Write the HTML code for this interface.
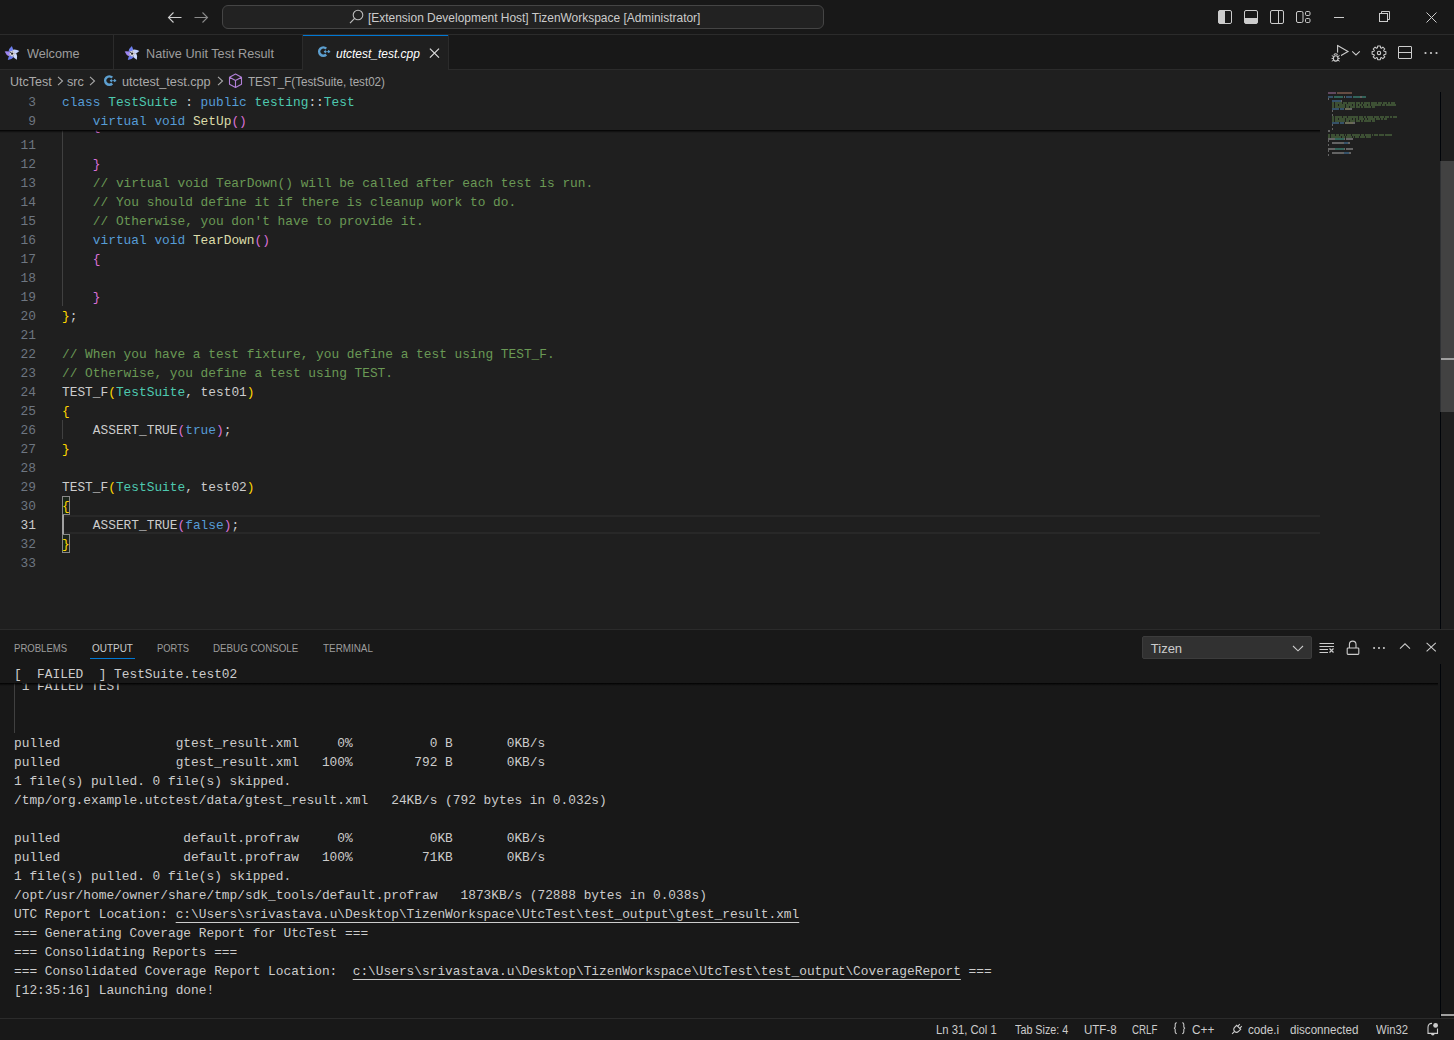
<!DOCTYPE html><html><head><meta charset="utf-8"><style>
*{margin:0;padding:0;box-sizing:border-box}
html,body{width:1454px;height:1040px;overflow:hidden;background:#1f1f1f}
body{position:relative;font-family:"Liberation Sans",sans-serif;color:#cccccc}
.a{position:absolute}
.t{position:absolute;white-space:pre;line-height:16px;height:16px}
.m{position:absolute;white-space:pre;font-family:"Liberation Mono",monospace;font-size:12.830px;line-height:19px;height:19px;padding-top:1px}
.ln{position:absolute;white-space:pre;font-family:"Liberation Mono",monospace;font-size:12.830px;line-height:19px;height:19px;text-align:right;width:36px;left:0;color:#6e7681;padding-top:1px}
.k{color:#569cd6}.ty{color:#4ec9b0}.fn{color:#dcdcaa}.cm{color:#6a9955}.b1{color:#ffd700}.b2{color:#da70d6}.df{color:#cccccc}
svg{position:absolute;overflow:visible}
</style></head><body>
<div class="a" style="left:0px;top:0px;width:1454px;height:34px;background:#181818;"></div>
<div class="a" style="left:0px;top:34px;width:1454px;height:1px;background:#2b2b2b;"></div>
<svg style="left:167px;top:11px;" width="16" height="13" viewBox="0 0 16 13"><path d="M1.5 6.5H14.5M6.5 1.5L1.5 6.5L6.5 11.5" fill="none" stroke="#cccccc" stroke-width="1.1"/></svg>
<svg style="left:193px;top:11px;" width="16" height="13" viewBox="0 0 16 13"><path d="M1.5 6.5H14.5M9.5 1.5L14.5 6.5L9.5 11.5" fill="none" stroke="#8a8a8a" stroke-width="1.1"/></svg>
<div class="a" style="left:222px;top:5px;width:602px;height:24px;background:#222222;border:1px solid #454545;border-radius:6px"></div>
<svg style="left:349px;top:9px;" width="16" height="16" viewBox="0 0 16 16"><circle cx="9" cy="6" r="4.8" fill="none" stroke="#bdbdbd" stroke-width="1.1"/><path d="M5.6 9.4L1 14.2" stroke="#bdbdbd" stroke-width="1.2"/></svg>
<div class="t" id="t1" style="left:368.00px;top:10px;font-size:12px;color:#cccccc;line-height:16px;height:16px;transform:scaleX(0.9955);transform-origin:0 0;">[Extension Development Host] TizenWorkspace [Administrator]</div>
<svg style="left:1218px;top:10px;" width="15" height="14" viewBox="0 0 15 14"><rect x="0.5" y="0.5" width="6" height="13" rx="1.5" fill="#cccccc"/><rect x="0.5" y="0.5" width="13" height="13" rx="1.5" fill="none" stroke="#cccccc"/><path d="M6.5 1V13" stroke="#cccccc"/></svg>
<svg style="left:1244px;top:10px;" width="15" height="14" viewBox="0 0 15 14"><rect x="0.5" y="8.5" width="13" height="5" rx="1.5" fill="#cccccc"/><rect x="0.5" y="0.5" width="13" height="13" rx="1.5" fill="none" stroke="#cccccc"/><path d="M1 8.5H13" stroke="#cccccc"/></svg>
<svg style="left:1270px;top:10px;" width="15" height="14" viewBox="0 0 15 14"><rect x="0.5" y="0.5" width="13" height="13" rx="1.5" fill="none" stroke="#cccccc"/><path d="M8.5 1V13" stroke="#cccccc"/></svg>
<svg style="left:1296px;top:10px;" width="15" height="14" viewBox="0 0 15 14"><rect x="0.5" y="1.5" width="6.5" height="11" rx="1.5" fill="none" stroke="#cccccc"/><rect x="9.5" y="1.5" width="4.5" height="4" rx="1.2" fill="none" stroke="#cccccc"/><rect x="9.5" y="8.5" width="4.5" height="4" rx="1.2" fill="none" stroke="#cccccc"/></svg>
<div class="a" style="left:1334px;top:17px;width:10px;height:1px;background:#cccccc;"></div>
<svg style="left:1379px;top:11px;" width="12" height="12" viewBox="0 0 12 12"><rect x="0.5" y="2.5" width="8" height="8" fill="none" stroke="#cccccc"/><path d="M2.5 2.5V0.5H10.5V8.5H8.5" fill="none" stroke="#cccccc"/></svg>
<svg style="left:1425.5px;top:11.5px;" width="12" height="12" viewBox="0 0 12 12"><path d="M0.5 0.5L10.5 10.5M10.5 0.5L0.5 10.5" stroke="#cccccc" stroke-width="1"/></svg>
<div class="a" style="left:0px;top:35px;width:1454px;height:35px;background:#181818;"></div>
<div class="a" style="left:0px;top:69px;width:1454px;height:1px;background:#2b2b2b;"></div>
<div class="a" style="left:113px;top:35px;width:1px;height:34px;background:#2b2b2b;"></div>
<svg style="left:5px;top:46px;" width="15" height="15" viewBox="0 0 15 15"><g transform="translate(-0.6 -0.3) scale(1.1)"><g transform="rotate(0 7 7.2)"><path d="M3.7 5.7Q4.1 2.2 6.8 0.2Q8.1 2.6 7.8 5.0Z" fill="#6d80f2"/><path d="M7 7.2L4.1 5.8Q5.9 4.3 7.8 5.0Z" fill="#d6d6de"/><path d="M7 7.2L7.9 4.7" stroke="#141414" stroke-width="0.6"/></g><g transform="rotate(72 7 7.2)"><path d="M3.7 5.7Q4.1 2.2 6.8 0.2Q8.1 2.6 7.8 5.0Z" fill="#c4d2ff"/><path d="M7 7.2L4.1 5.8Q5.9 4.3 7.8 5.0Z" fill="#d6d6de"/><path d="M7 7.2L7.9 4.7" stroke="#141414" stroke-width="0.6"/></g><g transform="rotate(144 7 7.2)"><path d="M3.7 5.7Q4.1 2.2 6.8 0.2Q8.1 2.6 7.8 5.0Z" fill="#cddcff"/><path d="M7 7.2L4.1 5.8Q5.9 4.3 7.8 5.0Z" fill="#d6d6de"/><path d="M7 7.2L7.9 4.7" stroke="#141414" stroke-width="0.6"/></g><g transform="rotate(216 7 7.2)"><path d="M3.7 5.7Q4.1 2.2 6.8 0.2Q8.1 2.6 7.8 5.0Z" fill="#6a7cf0"/><path d="M7 7.2L4.1 5.8Q5.9 4.3 7.8 5.0Z" fill="#d6d6de"/><path d="M7 7.2L7.9 4.7" stroke="#141414" stroke-width="0.6"/></g><g transform="rotate(288 7 7.2)"><path d="M3.7 5.7Q4.1 2.2 6.8 0.2Q8.1 2.6 7.8 5.0Z" fill="#9d86f2"/><path d="M7 7.2L4.1 5.8Q5.9 4.3 7.8 5.0Z" fill="#d6d6de"/><path d="M7 7.2L7.9 4.7" stroke="#141414" stroke-width="0.6"/></g><circle cx="7" cy="7.2" r="0.8" fill="#141414"/></g></svg>
<div class="t" id="t2" style="left:26.78px;top:46px;font-size:13px;color:#9d9d9d;line-height:16px;height:16px;transform:scaleX(0.9741);transform-origin:0 0;">Welcome</div>
<div class="a" style="left:302px;top:35px;width:1px;height:34px;background:#2b2b2b;"></div>
<svg style="left:125px;top:46px;" width="15" height="15" viewBox="0 0 15 15"><g transform="translate(-0.6 -0.3) scale(1.1)"><g transform="rotate(0 7 7.2)"><path d="M3.7 5.7Q4.1 2.2 6.8 0.2Q8.1 2.6 7.8 5.0Z" fill="#6d80f2"/><path d="M7 7.2L4.1 5.8Q5.9 4.3 7.8 5.0Z" fill="#d6d6de"/><path d="M7 7.2L7.9 4.7" stroke="#141414" stroke-width="0.6"/></g><g transform="rotate(72 7 7.2)"><path d="M3.7 5.7Q4.1 2.2 6.8 0.2Q8.1 2.6 7.8 5.0Z" fill="#c4d2ff"/><path d="M7 7.2L4.1 5.8Q5.9 4.3 7.8 5.0Z" fill="#d6d6de"/><path d="M7 7.2L7.9 4.7" stroke="#141414" stroke-width="0.6"/></g><g transform="rotate(144 7 7.2)"><path d="M3.7 5.7Q4.1 2.2 6.8 0.2Q8.1 2.6 7.8 5.0Z" fill="#cddcff"/><path d="M7 7.2L4.1 5.8Q5.9 4.3 7.8 5.0Z" fill="#d6d6de"/><path d="M7 7.2L7.9 4.7" stroke="#141414" stroke-width="0.6"/></g><g transform="rotate(216 7 7.2)"><path d="M3.7 5.7Q4.1 2.2 6.8 0.2Q8.1 2.6 7.8 5.0Z" fill="#6a7cf0"/><path d="M7 7.2L4.1 5.8Q5.9 4.3 7.8 5.0Z" fill="#d6d6de"/><path d="M7 7.2L7.9 4.7" stroke="#141414" stroke-width="0.6"/></g><g transform="rotate(288 7 7.2)"><path d="M3.7 5.7Q4.1 2.2 6.8 0.2Q8.1 2.6 7.8 5.0Z" fill="#9d86f2"/><path d="M7 7.2L4.1 5.8Q5.9 4.3 7.8 5.0Z" fill="#d6d6de"/><path d="M7 7.2L7.9 4.7" stroke="#141414" stroke-width="0.6"/></g><circle cx="7" cy="7.2" r="0.8" fill="#141414"/></g></svg>
<div class="t" id="t3" style="left:145.61px;top:46px;font-size:13px;color:#9d9d9d;line-height:16px;height:16px;transform:scaleX(0.9748);transform-origin:0 0;">Native Unit Test Result</div>
<div class="a" style="left:303px;top:35px;width:145px;height:35px;background:#1f1f1f;"></div>
<div class="a" style="left:303px;top:35px;width:145px;height:1px;background:#0078d4;"></div>
<div class="a" style="left:448px;top:35px;width:1px;height:34px;background:#2b2b2b;"></div>
<svg style="left:318px;top:46px;" width="13" height="12" viewBox="0 0 13 12"><path d="M8.2 2.7A4.1 4.1 0 1 0 8.2 8.5" fill="none" stroke="#5d9fcf" stroke-width="2.5"/><path d="M5.9 5.6H8.7M7.3 4.2V7M9.2 5.6H12.2M10.7 4.1V7.1" stroke="#5d9fcf" stroke-width="1.15"/></svg>
<div class="t" id="t4" style="left:335.76px;top:46px;font-size:13px;color:#ffffff;line-height:16px;height:16px;transform:scaleX(0.9217);transform-origin:0 0;font-style:italic">utctest_test.cpp</div>
<svg style="left:429px;top:48px;" width="11" height="11" viewBox="0 0 11 11"><path d="M0.9 0.6L10 9.7M10 0.6L0.9 9.7" stroke="#dddddd" stroke-width="1.2"/></svg>
<svg style="left:1331px;top:44px;" width="30" height="18" viewBox="0 0 30 18"><path d="M6.6 1.6L17 7.6L6.6 13.6Z" fill="none" stroke="#cccccc" stroke-width="1.1" stroke-linejoin="miter"/><rect x="0" y="8.6" width="10" height="9.4" fill="#181818"/><path d="M3 11.2a1.7 1.5 0 0 1 3.4 0" fill="none" stroke="#cccccc" stroke-width="1.1"/><ellipse cx="4.7" cy="14.4" rx="2.3" ry="2.7" fill="none" stroke="#cccccc" stroke-width="1.1"/><path d="M0.8 11.6L2.6 12.6M8.6 11.6L6.8 12.6M0.6 14.4H2.4M7 14.4H8.8M0.8 17.2L2.6 16.2M8.6 17.2L6.8 16.2" stroke="#cccccc" stroke-width="1"/><path d="M21.2 7.4L25 11L28.8 7.4" fill="none" stroke="#cccccc" stroke-width="1.05"/></svg>
<svg style="left:1371px;top:45px;" width="16" height="16" viewBox="0 0 16 16"><circle cx="8" cy="7.9" r="1.7" fill="none" stroke="#cccccc" stroke-width="1.1"/><path d="M6.44 2.83 L6.65 1.03 L9.35 1.03 L9.56 2.83 L10.48 3.22 L11.90 2.09 L13.81 4.00 L12.68 5.42 L13.07 6.34 L14.87 6.55 L14.87 9.25 L13.07 9.46 L12.68 10.38 L13.81 11.80 L11.90 13.71 L10.48 12.58 L9.56 12.97 L9.35 14.77 L6.65 14.77 L6.44 12.97 L5.52 12.58 L4.10 13.71 L2.19 11.80 L3.32 10.38 L2.93 9.46 L1.13 9.25 L1.13 6.55 L2.93 6.34 L3.32 5.42 L2.19 4.00 L4.10 2.09 L5.52 3.22Z" fill="none" stroke="#cccccc" stroke-width="1.05" stroke-linejoin="round"/></svg>
<svg style="left:1398px;top:46px;" width="15" height="14" viewBox="0 0 15 14"><rect x="0.5" y="0.5" width="13" height="12" rx="0.5" fill="none" stroke="#cccccc" stroke-width="1"/><path d="M1 6.5H13.5" stroke="#cccccc" stroke-width="1"/></svg>
<svg style="left:1424px;top:51px;" width="14" height="4" viewBox="0 0 14 4"><circle cx="1.5" cy="2" r="1.1" fill="#cccccc"/><circle cx="7" cy="2" r="1.1" fill="#cccccc"/><circle cx="12.5" cy="2" r="1.1" fill="#cccccc"/></svg>
<div class="a" style="left:0px;top:70px;width:1454px;height:22px;background:#1f1f1f;"></div>
<div class="t" id="t5" style="left:9.62px;top:74px;font-size:13px;color:#a9a9a9;line-height:16px;height:16px;transform:scaleX(0.9605);transform-origin:0 0;">UtcTest</div>
<svg style="left:57px;top:76px;" width="7" height="10" viewBox="0 0 7 10"><path d="M1 0.8L5.5 5L1 9.2" fill="none" stroke="#a9a9a9" stroke-width="1.1"/></svg>
<div class="t" id="t6" style="left:66.81px;top:74px;font-size:13px;color:#a9a9a9;line-height:16px;height:16px;transform:scaleX(0.9706);transform-origin:0 0;">src</div>
<svg style="left:89px;top:76px;" width="7" height="10" viewBox="0 0 7 10"><path d="M1 0.8L5.5 5L1 9.2" fill="none" stroke="#a9a9a9" stroke-width="1.1"/></svg>
<svg style="left:104px;top:75px;" width="13" height="12" viewBox="0 0 13 12"><path d="M8.2 2.7A4.1 4.1 0 1 0 8.2 8.5" fill="none" stroke="#5d9fcf" stroke-width="2.5"/><path d="M5.9 5.6H8.7M7.3 4.2V7M9.2 5.6H12.2M10.7 4.1V7.1" stroke="#5d9fcf" stroke-width="1.15"/></svg>
<div class="t" id="t7" style="left:122.19px;top:74px;font-size:13px;color:#a9a9a9;line-height:16px;height:16px;transform:scaleX(0.9736);transform-origin:0 0;">utctest_test.cpp</div>
<svg style="left:217px;top:76px;" width="7" height="10" viewBox="0 0 7 10"><path d="M1 0.8L5.5 5L1 9.2" fill="none" stroke="#a9a9a9" stroke-width="1.1"/></svg>
<svg style="left:228px;top:73px;" width="15" height="16" viewBox="0 0 15 16"><path d="M7.5 1L13.5 4.2V11.3L7.5 14.5L1.5 11.3V4.2Z M1.5 4.2L7.5 7.5L13.5 4.2 M7.5 7.5V14.5" fill="none" stroke="#b180d7" stroke-width="1.1" stroke-linejoin="round"/></svg>
<div class="t" id="t8" style="left:247.95px;top:74px;font-size:13px;color:#a9a9a9;line-height:16px;height:16px;transform:scaleX(0.8941);transform-origin:0 0;">TEST_F(TestSuite, test02)</div>
<div class="a" style="left:0px;top:92px;width:1440px;height:537px;background:#1f1f1f;"></div>
<div class="a" style="left:62px;top:515px;width:1258px;height:19px;background:transparent;border-top:2px solid #282828;border-bottom:2px solid #282828"></div>
<div class="a" style="left:62px;top:116px;width:1px;height:190px;background:#404040;"></div>
<div class="a" style="left:62px;top:420px;width:1px;height:19px;background:#404040;"></div>
<div class="a" style="left:62px;top:515px;width:2px;height:19px;background:#a0a0a0;"></div>
<div class="a" style="left:62px;top:496px;width:8px;height:19px;background:rgba(0,100,0,0.1);border:1px solid #888888"></div>
<div class="a" style="left:62px;top:534px;width:8px;height:19px;background:rgba(0,100,0,0.1);border:1px solid #888888"></div>
<div class="m" style="left:62px;top:116px;color:#cccccc">    <span class="b2">{</span></div>
<div class="ln" style="top:135px;">11</div>
<div class="m" style="left:62px;top:135px;color:#cccccc"></div>
<div class="ln" style="top:154px;">12</div>
<div class="m" style="left:62px;top:154px;color:#cccccc">    <span class="b2">}</span></div>
<div class="ln" style="top:173px;">13</div>
<div class="m" style="left:62px;top:173px;color:#cccccc">    <span class="cm">// virtual void TearDown() will be called after each test is run.</span></div>
<div class="ln" style="top:192px;">14</div>
<div class="m" style="left:62px;top:192px;color:#cccccc">    <span class="cm">// You should define it if there is cleanup work to do.</span></div>
<div class="ln" style="top:211px;">15</div>
<div class="m" style="left:62px;top:211px;color:#cccccc">    <span class="cm">// Otherwise, you don&#x27;t have to provide it.</span></div>
<div class="ln" style="top:230px;">16</div>
<div class="m" style="left:62px;top:230px;color:#cccccc">    <span class="k">virtual</span> <span class="k">void</span> <span class="fn">TearDown</span><span class="b2">()</span></div>
<div class="ln" style="top:249px;">17</div>
<div class="m" style="left:62px;top:249px;color:#cccccc">    <span class="b2">{</span></div>
<div class="ln" style="top:268px;">18</div>
<div class="m" style="left:62px;top:268px;color:#cccccc"></div>
<div class="ln" style="top:287px;">19</div>
<div class="m" style="left:62px;top:287px;color:#cccccc">    <span class="b2">}</span></div>
<div class="ln" style="top:306px;">20</div>
<div class="m" style="left:62px;top:306px;color:#cccccc"><span class="b1">}</span>;</div>
<div class="ln" style="top:325px;">21</div>
<div class="m" style="left:62px;top:325px;color:#cccccc"></div>
<div class="ln" style="top:344px;">22</div>
<div class="m" style="left:62px;top:344px;color:#cccccc"><span class="cm">// When you have a test fixture, you define a test using TEST_F.</span></div>
<div class="ln" style="top:363px;">23</div>
<div class="m" style="left:62px;top:363px;color:#cccccc"><span class="cm">// Otherwise, you define a test using TEST.</span></div>
<div class="ln" style="top:382px;">24</div>
<div class="m" style="left:62px;top:382px;color:#cccccc">TEST_F<span class="b1">(</span><span class="ty">TestSuite</span>, test01<span class="b1">)</span></div>
<div class="ln" style="top:401px;">25</div>
<div class="m" style="left:62px;top:401px;color:#cccccc"><span class="b1">{</span></div>
<div class="ln" style="top:420px;">26</div>
<div class="m" style="left:62px;top:420px;color:#cccccc">    ASSERT_TRUE<span class="b2">(</span><span class="k">true</span><span class="b2">)</span>;</div>
<div class="ln" style="top:439px;">27</div>
<div class="m" style="left:62px;top:439px;color:#cccccc"><span class="b1">}</span></div>
<div class="ln" style="top:458px;">28</div>
<div class="m" style="left:62px;top:458px;color:#cccccc"></div>
<div class="ln" style="top:477px;">29</div>
<div class="m" style="left:62px;top:477px;color:#cccccc">TEST_F<span class="b1">(</span><span class="ty">TestSuite</span>, test02<span class="b1">)</span></div>
<div class="ln" style="top:496px;">30</div>
<div class="m" style="left:62px;top:496px;color:#cccccc"><span class="b1">{</span></div>
<div class="ln" style="top:515px;color:#cccccc;">31</div>
<div class="m" style="left:62px;top:515px;color:#cccccc">    ASSERT_TRUE<span class="b2">(</span><span class="k">false</span><span class="b2">)</span>;</div>
<div class="ln" style="top:534px;">32</div>
<div class="m" style="left:62px;top:534px;color:#cccccc"><span class="b1">}</span></div>
<div class="ln" style="top:553px;">33</div>
<div class="m" style="left:62px;top:553px;color:#cccccc"></div>
<div class="a" style="left:0px;top:92px;width:1320px;height:38px;background:#1f1f1f;"></div>
<div class="a" style="left:0;top:130px;width:1320px;height:3px;background:linear-gradient(#000000 0,rgba(0,0,0,0.55) 1px,rgba(0,0,0,0) 3px)"></div>
<div class="ln" style="top:92px;">3</div>
<div class="m" style="left:62px;top:92px;color:#cccccc"><span class="k">class</span> <span class="ty">TestSuite</span> : <span class="k">public</span> <span class="ty">testing</span>::<span class="ty">Test</span></div>
<div class="ln" style="top:111px;">9</div>
<div class="m" style="left:62px;top:111px;color:#cccccc">    <span class="k">virtual</span> <span class="k">void</span> <span class="fn">SetUp</span><span class="b2">()</span></div>
<svg style="left:1328px;top:92px;opacity:0.4" width="80" height="70" viewBox="0 0 80 70"><rect x="0" y="0" width="8" height="2" fill="#c586c0"/><rect x="9" y="0" width="15" height="2" fill="#ce9178"/><rect x="0" y="4" width="5" height="2" fill="#569cd6"/><rect x="6" y="4" width="9" height="2" fill="#4ec9b0"/><rect x="16" y="4" width="1" height="2" fill="#cccccc"/><rect x="18" y="4" width="6" height="2" fill="#569cd6"/><rect x="25" y="4" width="7" height="2" fill="#4ec9b0"/><rect x="32" y="4" width="2" height="2" fill="#cccccc"/><rect x="34" y="4" width="4" height="2" fill="#4ec9b0"/><rect x="0" y="6" width="1" height="2" fill="#cccccc"/><rect x="4" y="8" width="9" height="2" fill="#569cd6"/><rect x="13" y="8" width="1" height="2" fill="#cccccc"/><rect x="4" y="10" width="2" height="2" fill="#6a9955"/><rect x="7" y="10" width="7" height="2" fill="#6a9955"/><rect x="15" y="10" width="4" height="2" fill="#6a9955"/><rect x="20" y="10" width="7" height="2" fill="#6a9955"/><rect x="28" y="10" width="4" height="2" fill="#6a9955"/><rect x="33" y="10" width="2" height="2" fill="#6a9955"/><rect x="36" y="10" width="6" height="2" fill="#6a9955"/><rect x="43" y="10" width="6" height="2" fill="#6a9955"/><rect x="50" y="10" width="4" height="2" fill="#6a9955"/><rect x="55" y="10" width="4" height="2" fill="#6a9955"/><rect x="60" y="10" width="2" height="2" fill="#6a9955"/><rect x="63" y="10" width="4" height="2" fill="#6a9955"/><rect x="4" y="12" width="2" height="2" fill="#6a9955"/><rect x="7" y="12" width="3" height="2" fill="#6a9955"/><rect x="11" y="12" width="6" height="2" fill="#6a9955"/><rect x="18" y="12" width="6" height="2" fill="#6a9955"/><rect x="25" y="12" width="2" height="2" fill="#6a9955"/><rect x="28" y="12" width="2" height="2" fill="#6a9955"/><rect x="31" y="12" width="3" height="2" fill="#6a9955"/><rect x="35" y="12" width="4" height="2" fill="#6a9955"/><rect x="40" y="12" width="2" height="2" fill="#6a9955"/><rect x="43" y="12" width="10" height="2" fill="#6a9955"/><rect x="54" y="12" width="3" height="2" fill="#6a9955"/><rect x="58" y="12" width="10" height="2" fill="#6a9955"/><rect x="4" y="14" width="2" height="2" fill="#6a9955"/><rect x="7" y="14" width="10" height="2" fill="#6a9955"/><rect x="18" y="14" width="3" height="2" fill="#6a9955"/><rect x="22" y="14" width="5" height="2" fill="#6a9955"/><rect x="28" y="14" width="4" height="2" fill="#6a9955"/><rect x="33" y="14" width="2" height="2" fill="#6a9955"/><rect x="36" y="14" width="7" height="2" fill="#6a9955"/><rect x="44" y="14" width="3" height="2" fill="#6a9955"/><rect x="4" y="16" width="7" height="2" fill="#569cd6"/><rect x="12" y="16" width="4" height="2" fill="#569cd6"/><rect x="17" y="16" width="5" height="2" fill="#dcdcaa"/><rect x="22" y="16" width="2" height="2" fill="#cccccc"/><rect x="4" y="18" width="1" height="2" fill="#cccccc"/><rect x="4" y="22" width="1" height="2" fill="#cccccc"/><rect x="4" y="24" width="2" height="2" fill="#6a9955"/><rect x="7" y="24" width="7" height="2" fill="#6a9955"/><rect x="15" y="24" width="4" height="2" fill="#6a9955"/><rect x="20" y="24" width="10" height="2" fill="#6a9955"/><rect x="31" y="24" width="4" height="2" fill="#6a9955"/><rect x="36" y="24" width="2" height="2" fill="#6a9955"/><rect x="39" y="24" width="6" height="2" fill="#6a9955"/><rect x="46" y="24" width="5" height="2" fill="#6a9955"/><rect x="52" y="24" width="4" height="2" fill="#6a9955"/><rect x="57" y="24" width="4" height="2" fill="#6a9955"/><rect x="62" y="24" width="2" height="2" fill="#6a9955"/><rect x="65" y="24" width="4" height="2" fill="#6a9955"/><rect x="4" y="26" width="2" height="2" fill="#6a9955"/><rect x="7" y="26" width="3" height="2" fill="#6a9955"/><rect x="11" y="26" width="6" height="2" fill="#6a9955"/><rect x="18" y="26" width="6" height="2" fill="#6a9955"/><rect x="25" y="26" width="2" height="2" fill="#6a9955"/><rect x="28" y="26" width="2" height="2" fill="#6a9955"/><rect x="31" y="26" width="5" height="2" fill="#6a9955"/><rect x="37" y="26" width="2" height="2" fill="#6a9955"/><rect x="40" y="26" width="7" height="2" fill="#6a9955"/><rect x="48" y="26" width="4" height="2" fill="#6a9955"/><rect x="53" y="26" width="2" height="2" fill="#6a9955"/><rect x="56" y="26" width="3" height="2" fill="#6a9955"/><rect x="4" y="28" width="2" height="2" fill="#6a9955"/><rect x="7" y="28" width="10" height="2" fill="#6a9955"/><rect x="18" y="28" width="3" height="2" fill="#6a9955"/><rect x="22" y="28" width="5" height="2" fill="#6a9955"/><rect x="28" y="28" width="4" height="2" fill="#6a9955"/><rect x="33" y="28" width="2" height="2" fill="#6a9955"/><rect x="36" y="28" width="7" height="2" fill="#6a9955"/><rect x="44" y="28" width="3" height="2" fill="#6a9955"/><rect x="4" y="30" width="7" height="2" fill="#569cd6"/><rect x="12" y="30" width="4" height="2" fill="#569cd6"/><rect x="17" y="30" width="8" height="2" fill="#dcdcaa"/><rect x="25" y="30" width="2" height="2" fill="#cccccc"/><rect x="4" y="32" width="1" height="2" fill="#cccccc"/><rect x="4" y="36" width="1" height="2" fill="#cccccc"/><rect x="0" y="38" width="1" height="2" fill="#cccccc"/><rect x="1" y="38" width="1" height="2" fill="#cccccc"/><rect x="0" y="42" width="2" height="2" fill="#6a9955"/><rect x="3" y="42" width="4" height="2" fill="#6a9955"/><rect x="8" y="42" width="3" height="2" fill="#6a9955"/><rect x="12" y="42" width="4" height="2" fill="#6a9955"/><rect x="17" y="42" width="1" height="2" fill="#6a9955"/><rect x="19" y="42" width="4" height="2" fill="#6a9955"/><rect x="24" y="42" width="8" height="2" fill="#6a9955"/><rect x="33" y="42" width="3" height="2" fill="#6a9955"/><rect x="37" y="42" width="6" height="2" fill="#6a9955"/><rect x="44" y="42" width="1" height="2" fill="#6a9955"/><rect x="46" y="42" width="4" height="2" fill="#6a9955"/><rect x="51" y="42" width="5" height="2" fill="#6a9955"/><rect x="57" y="42" width="7" height="2" fill="#6a9955"/><rect x="0" y="44" width="2" height="2" fill="#6a9955"/><rect x="3" y="44" width="10" height="2" fill="#6a9955"/><rect x="14" y="44" width="3" height="2" fill="#6a9955"/><rect x="18" y="44" width="6" height="2" fill="#6a9955"/><rect x="25" y="44" width="1" height="2" fill="#6a9955"/><rect x="27" y="44" width="4" height="2" fill="#6a9955"/><rect x="32" y="44" width="5" height="2" fill="#6a9955"/><rect x="38" y="44" width="5" height="2" fill="#6a9955"/><rect x="0" y="46" width="6" height="2" fill="#cccccc"/><rect x="6" y="46" width="1" height="2" fill="#cccccc"/><rect x="7" y="46" width="9" height="2" fill="#4ec9b0"/><rect x="16" y="46" width="1" height="2" fill="#cccccc"/><rect x="18" y="46" width="6" height="2" fill="#cccccc"/><rect x="24" y="46" width="1" height="2" fill="#cccccc"/><rect x="0" y="48" width="1" height="2" fill="#cccccc"/><rect x="4" y="50" width="11" height="2" fill="#cccccc"/><rect x="15" y="50" width="1" height="2" fill="#cccccc"/><rect x="16" y="50" width="4" height="2" fill="#569cd6"/><rect x="20" y="50" width="1" height="2" fill="#cccccc"/><rect x="21" y="50" width="1" height="2" fill="#cccccc"/><rect x="0" y="52" width="1" height="2" fill="#cccccc"/><rect x="0" y="56" width="6" height="2" fill="#cccccc"/><rect x="6" y="56" width="1" height="2" fill="#cccccc"/><rect x="7" y="56" width="9" height="2" fill="#4ec9b0"/><rect x="16" y="56" width="1" height="2" fill="#cccccc"/><rect x="18" y="56" width="6" height="2" fill="#cccccc"/><rect x="24" y="56" width="1" height="2" fill="#cccccc"/><rect x="0" y="58" width="1" height="2" fill="#cccccc"/><rect x="4" y="60" width="11" height="2" fill="#cccccc"/><rect x="15" y="60" width="1" height="2" fill="#cccccc"/><rect x="16" y="60" width="5" height="2" fill="#569cd6"/><rect x="21" y="60" width="1" height="2" fill="#cccccc"/><rect x="22" y="60" width="1" height="2" fill="#cccccc"/><rect x="0" y="62" width="1" height="2" fill="#cccccc"/></svg>
<div class="a" style="left:1440px;top:92px;width:14px;height:537px;background:#1f1f1f;"></div>
<div class="a" style="left:1440px;top:92px;width:1px;height:537px;background:#010409;"></div>
<div class="a" style="left:1440px;top:161px;width:14px;height:251px;background:rgba(121,121,121,0.4);"></div>
<div class="a" style="left:1441px;top:358px;width:13px;height:2px;background:#a0a0a0;"></div>
<div class="a" style="left:0px;top:629px;width:1454px;height:389px;background:#181818;"></div>
<div class="a" style="left:0px;top:629px;width:1454px;height:1px;background:#2b2b2b;"></div>
<div class="t" id="t9" style="left:14.43px;top:640px;font-size:11px;color:#9d9d9d;line-height:16px;height:16px;transform:scaleX(0.8689);transform-origin:0 0;">PROBLEMS</div>
<div class="t" id="t10" style="left:91.80px;top:640px;font-size:11px;color:#cccccc;line-height:16px;height:16px;transform:scaleX(0.9044);transform-origin:0 0;">OUTPUT</div>
<div class="t" id="t11" style="left:157.07px;top:640px;font-size:11px;color:#9d9d9d;line-height:16px;height:16px;transform:scaleX(0.8514);transform-origin:0 0;">PORTS</div>
<div class="t" id="t12" style="left:213.24px;top:640px;font-size:11px;color:#9d9d9d;line-height:16px;height:16px;transform:scaleX(0.8884);transform-origin:0 0;">DEBUG CONSOLE</div>
<div class="t" id="t13" style="left:323.00px;top:640px;font-size:11px;color:#9d9d9d;line-height:16px;height:16px;transform:scaleX(0.8982);transform-origin:0 0;">TERMINAL</div>
<div class="a" style="left:90px;top:658px;width:45px;height:1px;background:#0078d4;"></div>
<div class="a" style="left:1142px;top:636px;width:170px;height:23px;background:#313131;border:1px solid #3c3c3c;border-radius:2px"></div>
<div class="t" id="t14" style="left:1150.79px;top:641px;font-size:13px;color:#cccccc;line-height:16px;height:16px;transform:scaleX(1.0000);transform-origin:0 0;">Tizen</div>
<svg style="left:1292px;top:645px;" width="12" height="7" viewBox="0 0 12 7"><path d="M1 1L6 5.8L11 1" fill="none" stroke="#cccccc" stroke-width="1.05"/></svg>
<svg style="left:1319px;top:641px;" width="16" height="13" viewBox="0 0 16 13"><path d="M0.5 2.5H15M0.5 5.5H15M0.5 8.5H9M0.5 11.5H9" stroke="#cccccc" stroke-width="1"/><path d="M10.5 7.5L14.5 11.5M14.5 7.5L10.5 11.5" stroke="#cccccc" stroke-width="1.2"/></svg>
<svg style="left:1346px;top:640px;" width="14" height="16" viewBox="0 0 14 16"><path d="M3.4 8V4.4a3.3 3.3 0 0 1 6.6 0V8" fill="none" stroke="#cccccc" stroke-width="1.1"/><rect x="1.2" y="8" width="11.6" height="6.4" rx="0.8" fill="none" stroke="#cccccc" stroke-width="1.1"/></svg>
<svg style="left:1372px;top:646px;" width="14" height="4" viewBox="0 0 14 4"><circle cx="2.1" cy="2" r="1.05" fill="#cccccc"/><circle cx="7" cy="2" r="1.05" fill="#cccccc"/><circle cx="11.9" cy="2" r="1.05" fill="#cccccc"/></svg>
<svg style="left:1399px;top:643px;" width="12" height="8" viewBox="0 0 12 8"><path d="M1 5.6L6 0.8L11 5.6" fill="none" stroke="#cccccc" stroke-width="1.05"/></svg>
<svg style="left:1426px;top:642px;" width="11" height="11" viewBox="0 0 11 11"><path d="M0.6 0.8L9.8 9.4M9.8 0.8L0.6 9.4" stroke="#cccccc" stroke-width="1.05"/></svg>
<div class="m" style="left:14px;top:676px;color:#cccccc"> 1 FAILED TEST</div>
<div class="m" style="left:14px;top:733px;color:#cccccc">pulled               gtest_result.xml     0%          0 B       0KB/s</div>
<div class="m" style="left:14px;top:752px;color:#cccccc">pulled               gtest_result.xml   100%        792 B       0KB/s</div>
<div class="m" style="left:14px;top:771px;color:#cccccc">1 file(s) pulled. 0 file(s) skipped.</div>
<div class="m" style="left:14px;top:790px;color:#cccccc">/tmp/org.example.utctest/data/gtest_result.xml   24KB/s (792 bytes in 0.032s)</div>
<div class="m" style="left:14px;top:828px;color:#cccccc">pulled                default.profraw     0%          0KB       0KB/s</div>
<div class="m" style="left:14px;top:847px;color:#cccccc">pulled                default.profraw   100%         71KB       0KB/s</div>
<div class="m" style="left:14px;top:866px;color:#cccccc">1 file(s) pulled. 0 file(s) skipped.</div>
<div class="m" style="left:14px;top:885px;color:#cccccc">/opt/usr/home/owner/share/tmp/sdk_tools/default.profraw   1873KB/s (72888 bytes in 0.038s)</div>
<div class="m" style="left:14px;top:904px;color:#cccccc">UTC Report Location: <span style="text-decoration:underline;text-underline-offset:4px;text-decoration-skip-ink:none">c:\Users\srivastava.u\Desktop\TizenWorkspace\UtcTest\test_output\gtest_result.xml</span></div>
<div class="m" style="left:14px;top:923px;color:#cccccc">=== Generating Coverage Report for UtcTest ===</div>
<div class="m" style="left:14px;top:942px;color:#cccccc">=== Consolidating Reports ===</div>
<div class="m" style="left:14px;top:961px;color:#cccccc">=== Consolidated Coverage Report Location:  <span style="text-decoration:underline;text-underline-offset:4px;text-decoration-skip-ink:none">c:\Users\srivastava.u\Desktop\TizenWorkspace\UtcTest\test_output\CoverageReport</span> ===</div>
<div class="m" style="left:14px;top:980px;color:#cccccc">[12:35:16] Launching done!</div>
<div class="a" style="left:14px;top:683px;width:1px;height:50px;background:#404040;"></div>
<div class="a" style="left:0px;top:664px;width:1440px;height:19px;background:#181818;"></div>
<div class="a" style="left:0;top:683px;width:1438px;height:3px;background:linear-gradient(#000000 0,rgba(0,0,0,0.55) 1px,rgba(0,0,0,0) 3px)"></div>
<div class="m" style="left:14px;top:664px;color:#cccccc">[  FAILED  ] TestSuite.test02</div>
<div class="a" style="left:1440px;top:664px;width:14px;height:354px;background:#181818;"></div>
<div class="a" style="left:1440px;top:664px;width:1px;height:354px;background:#010409;"></div>
<div class="a" style="left:1441px;top:1014px;width:13px;height:2px;background:#a0a0a0;"></div>
<div class="a" style="left:0px;top:1018px;width:1454px;height:22px;background:#181818;"></div>
<div class="a" style="left:0px;top:1018px;width:1454px;height:1px;background:#2b2b2b;"></div>
<div class="t" id="t15" style="left:935.64px;top:1022px;font-size:12px;color:#cccccc;line-height:16px;height:16px;transform:scaleX(0.9391);transform-origin:0 0;">Ln 31, Col 1</div>
<div class="t" id="t16" style="left:1015.32px;top:1022px;font-size:12px;color:#cccccc;line-height:16px;height:16px;transform:scaleX(0.8983);transform-origin:0 0;">Tab Size: 4</div>
<div class="t" id="t17" style="left:1083.62px;top:1022px;font-size:12px;color:#cccccc;line-height:16px;height:16px;transform:scaleX(0.9606);transform-origin:0 0;">UTF-8</div>
<div class="t" id="t18" style="left:1132.27px;top:1022px;font-size:12px;color:#cccccc;line-height:16px;height:16px;transform:scaleX(0.8097);transform-origin:0 0;">CRLF</div>
<div class="t" id="t19" style="left:1192.39px;top:1022px;font-size:12px;color:#cccccc;line-height:16px;height:16px;transform:scaleX(0.9870);transform-origin:0 0;">C++</div>
<div class="t" id="t20" style="left:1247.60px;top:1022px;font-size:12px;color:#cccccc;line-height:16px;height:16px;transform:scaleX(0.9719);transform-origin:0 0;">code.i</div>
<div class="t" id="t21" style="left:1289.59px;top:1022px;font-size:12px;color:#cccccc;line-height:16px;height:16px;transform:scaleX(0.9676);transform-origin:0 0;">disconnected</div>
<div class="t" id="t22" style="left:1376.00px;top:1022px;font-size:12px;color:#cccccc;line-height:16px;height:16px;transform:scaleX(0.9412);transform-origin:0 0;">Win32</div>
<svg style="left:1173px;top:1022px;" width="13" height="13" viewBox="0 0 13 13"><path d="M3.8 0.8Q2.2 0.8 2.2 2.4V4.8Q2.2 5.9 1 6.2Q2.2 6.5 2.2 7.6V10Q2.2 11.6 3.8 11.6M9.2 0.8Q10.8 0.8 10.8 2.4V4.8Q10.8 5.9 12 6.2Q10.8 6.5 10.8 7.6V10Q10.8 11.6 9.2 11.6" fill="none" stroke="#cccccc" stroke-width="1.05"/></svg>
<svg style="left:1229px;top:1021px;" width="16" height="16" viewBox="0 0 16 16"><g transform="rotate(45 8 8)"><path d="M5.2 5.6H10.8V8.6A2.8 2.8 0 0 1 5.2 8.6Z" fill="none" stroke="#cccccc" stroke-width="1.1"/><path d="M6.6 2.6V5.6M9.4 2.6V5.6M8 11.4V15" stroke="#cccccc" stroke-width="1.1"/></g></svg>
<svg style="left:1426px;top:1021px;" width="14" height="15" viewBox="0 0 14 15"><path d="M6 2.4Q2 2.4 2 6.4V12.4H11.5V7.6" fill="none" stroke="#cccccc" stroke-width="1.1"/><path d="M5 12.8a1.8 1.6 0 0 0 3.6 0z" fill="#cccccc"/><circle cx="9.6" cy="4.4" r="2.4" fill="#cccccc"/></svg>
</body></html>
